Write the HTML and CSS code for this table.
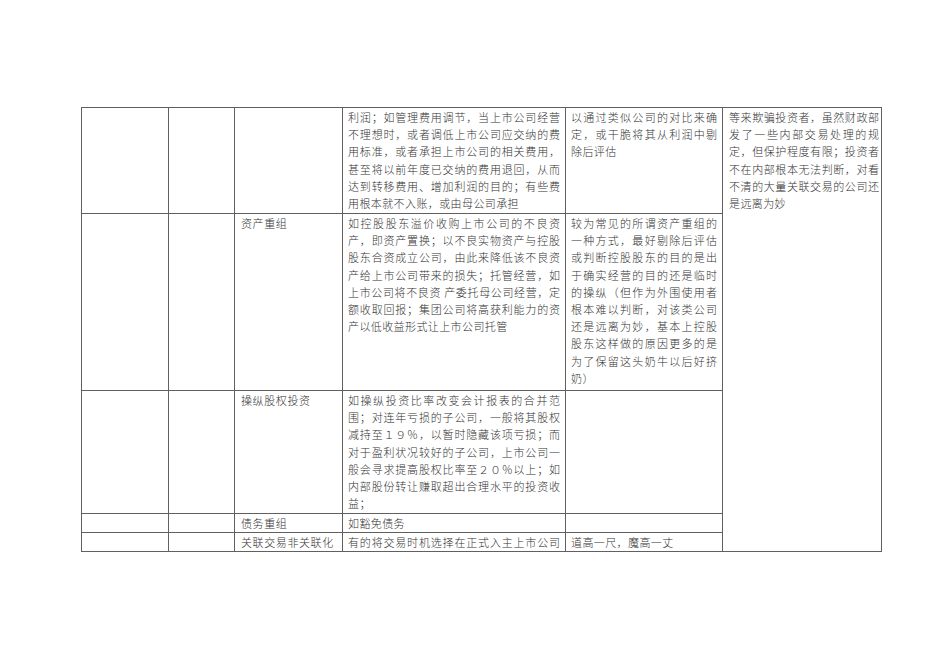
FILE: index.html
```html
<!DOCTYPE html>
<html lang="zh">
<head>
<meta charset="utf-8">
<title>关联交易</title>
<link rel="stylesheet" href="styles.css">
</head>
<body>
<div class="page">
<table class="grid">
<colgroup>
<col class="c1"><col class="c2"><col class="c3"><col class="c4"><col class="c5"><col class="c6">
</colgroup>
<tbody>
<tr class="r1">
<td></td><td></td><td></td>
<td>
<span class="ln">利润；如管理费用调节，当上市公司经营</span>
<span class="ln">不理想时，或者调低上市公司应交纳的费</span>
<span class="ln">用标准，或者承担上市公司的相关费用，</span>
<span class="ln">甚至将以前年度已交纳的费用退回，从而</span>
<span class="ln">达到转移费用、增加利润的目的；有些费</span>
<span class="ln end">用根本就不入账，或由母公司承担</span>
</td>
<td>
<span class="ln">以通过类似公司的对比来确</span>
<span class="ln">定，或干脆将其从利润中剔</span>
<span class="ln end">除后评估</span>
</td>
<td rowspan="5" class="last">
<span class="ln">等来欺骗投资者，虽然财政部</span>
<span class="ln">发了一些内部交易处理的规</span>
<span class="ln">定，但保护程度有限；投资者</span>
<span class="ln">不在内部根本无法判断，对看</span>
<span class="ln">不清的大量关联交易的公司还</span>
<span class="ln end">是远离为妙</span>
</td>
</tr>
<tr class="r2">
<td></td><td></td>
<td class="label">资产重组</td>
<td>
<span class="ln">如控股股东溢价收购上市公司的不良资</span>
<span class="ln">产，即资产置换；以不良实物资产与控股</span>
<span class="ln">股东合资成立公司，由此来降低该不良资</span>
<span class="ln">产给上市公司带来的损失；托管经营，如</span>
<span class="ln">上市公司将不良资 产委托母公司经营，定</span>
<span class="ln">额收取回报；集团公司将高获利能力的资</span>
<span class="ln end">产以低收益形式让上市公司托管</span>
</td>
<td>
<span class="ln">较为常见的所谓资产重组的</span>
<span class="ln">一种方式，最好剔除后评估</span>
<span class="ln">或判断控股股东的目的是出</span>
<span class="ln">于确实经营的目的还是临时</span>
<span class="ln">的操纵（但作为外围使用者</span>
<span class="ln">根本难以判断，对该类公司</span>
<span class="ln">还是远离为妙，基本上控股</span>
<span class="ln">股东这样做的原因更多的是</span>
<span class="ln">为了保留这头奶牛以后好挤</span>
<span class="ln end">奶）</span>
</td>
</tr>
<tr class="r3">
<td></td><td></td>
<td class="label">操纵股权投资</td>
<td>
<span class="ln">如操纵投资比率改变会计报表的合并范</span>
<span class="ln">围；对连年亏损的子公司，一般将其股权</span>
<span class="ln">减持至１９％，以暂时隐藏该项亏损；而</span>
<span class="ln">对于盈利状况较好的子公司，上市公司一</span>
<span class="ln">般会寻求提高股权比率至２０％以上；如</span>
<span class="ln">内部股份转让赚取超出合理水平的投资收</span>
<span class="ln end">益；</span>
</td>
<td></td>
</tr>
<tr class="r4">
<td></td><td></td>
<td class="label">债务重组</td>
<td><span class="ln end">如豁免债务</span></td>
<td></td>
</tr>
<tr class="r5">
<td></td><td></td>
<td class="label">关联交易非关联化</td>
<td><span class="ln">有的将交易时机选择在正式入主上市公司</span></td>
<td><span class="ln end">道高一尺，魔高一丈</span></td>
</tr>
</tbody>
</table>
</div>
</body>
</html>
```

FILE: styles.css
```css
html, body {
  margin: 0;
  padding: 0;
  background: #ffffff;
}

.page {
  padding: 107px 0 0 81px;
}

.grid {
  border-collapse: collapse;
  table-layout: fixed;
  width: 801px;
  font-family: "Noto Sans CJK SC", "Noto Sans CJK JP", sans-serif;
  font-size: 11px;
  font-weight: 300;
  line-height: 17.2px;
  color: #333333;
}

.c1 { width: 87px; }
.c2 { width: 66px; }
.c3 { width: 108px; }
.c4 { width: 223px; }
.c5 { width: 157px; }
.c6 { width: 159px; }

.grid td {
  border: 1px solid #606060;
  vertical-align: top;
  padding: 1px 5px 0 5px;
}

.grid td.last {
  padding: 1px 2px 0 6px;
}

.grid td.label {
  padding-left: 6px;
  letter-spacing: 0.6px;
}

.r1 { height: 106px; }
.r2 { height: 177px; }
.r3 { height: 123px; }
.r4 { height: 19px; }
.r5 { height: 18px; }

.ln {
  display: block;
  text-align: justify;
  text-align-last: justify;
  white-space: nowrap;
}

.ln.end {
  text-align-last: left;
  letter-spacing: 0.4px;
}
```
